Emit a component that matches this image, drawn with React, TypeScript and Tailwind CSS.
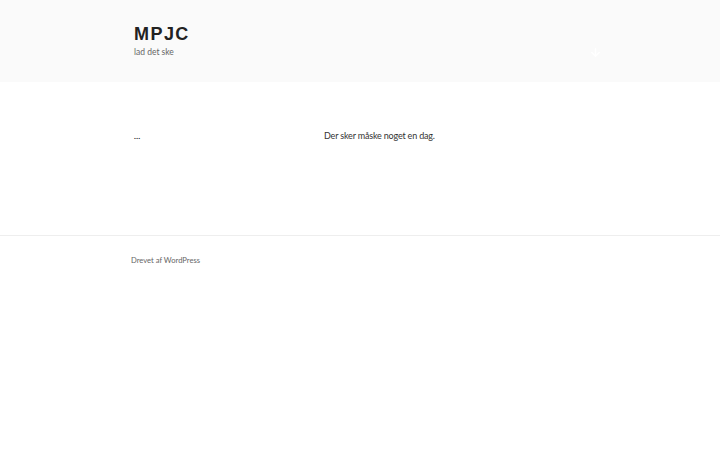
import { ArrowDown } from "lucide-react";

export default function App() {
  return (
    <div className="min-h-[450px] bg-white text-[#333] font-['Lato','Open_Sans',sans-serif]">
      <header className="h-[82px] bg-[#fafafa]">
        <div className="flex h-full items-start justify-between pl-[134px] pr-[118px]">
          <div className="pt-[25px]">
            <h1 className="text-[18px] font-extrabold leading-[18px] tracking-[0.08em] text-[#222] font-['Liberation_Sans',sans-serif]">
              MPJC
            </h1>
            <p className="mt-[4px] text-[8.5px] leading-[10px] text-[#666]">lad det ske</p>
          </div>
          <div className="pt-[46px] text-white">
            <ArrowDown size={13} strokeWidth={2.5} />
          </div>
        </div>
      </header>

      <main className="flex h-[153px] pl-[134px] pt-[49px]">
        <div className="w-[190px] text-[8px] font-bold leading-[10px] text-[#222]">…</div>
        <p className="text-[9px] leading-[10px] tracking-[-0.02em] text-[#333]">Der sker måske noget en dag.</p>
      </main>

      <footer className="border-t border-[#eee] pl-[131px] pt-[19px]">
        <p className="text-[7.6px] leading-[10px] text-[#666]">Drevet af WordPress</p>
      </footer>
    </div>
  );
}
